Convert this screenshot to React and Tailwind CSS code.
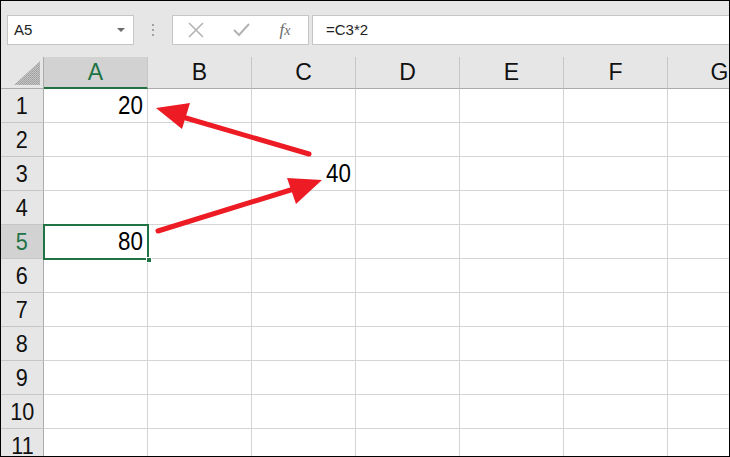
import React from 'react';

const columns = ['A', 'B', 'C', 'D', 'E', 'F', 'G'];
const rows = [1, 2, 3, 4, 5, 6, 7, 8, 9, 10, 11];

const values = {
  A1: '20',
  C3: '40',
  A5: '80',
};

const Toolbar = () => {
  return (
    <div className="h-[56px] flex items-start pt-[14px] pl-[6px]">
      <div className="w-[127px] h-[30px] bg-white border border-[#c6c6c6] flex items-center justify-between pl-[6px] pr-[8px]">
        <span className="text-[15px] text-[#222]">A5</span>
        <svg width="8" height="4" viewBox="0 0 8 4">
          <polygon points="0,0 8,0 4,4" fill="#6b6b6b" />
        </svg>
      </div>

      <div className="w-[38px] h-[30px] flex flex-col items-center justify-center gap-[3px]">
        <span className="w-[2px] h-[2px] bg-[#a0a0a0]" />
        <span className="w-[2px] h-[2px] bg-[#a0a0a0]" />
        <span className="w-[2px] h-[2px] bg-[#a0a0a0]" />
      </div>

      <div className="w-[137px] h-[30px] bg-white border border-[#c6c6c6] flex items-center">
        <div className="w-[46px] flex justify-center">
          <svg width="16" height="16" viewBox="0 0 16 16">
            <path d="M1 1 L15 15 M15 1 L1 15" stroke="#b3b3b3" strokeWidth="1.6" />
          </svg>
        </div>
        <div className="w-[44px] flex justify-center">
          <svg width="17" height="14" viewBox="0 0 17 14">
            <path d="M1 7 L6 12 L16 1" stroke="#b3b3b3" strokeWidth="2" fill="none" />
          </svg>
        </div>
        <div className="w-[44px] flex justify-center">
          <span className="text-[17px] italic text-[#6b6b6b] font-['Liberation_Serif',serif]">
            f<span className="text-[14px]">x</span>
          </span>
        </div>
      </div>

      <div className="ml-[3px] flex-1 h-[30px] bg-white border border-[#c6c6c6] border-r-0 flex items-center pl-[13px]">
        <span className="text-[15px] text-[#222]">=C3*2</span>
      </div>
    </div>
  );
};

const HeaderRow = () => {
  return (
    <div className="flex h-[32px]">
      <div className="w-[43px] shrink-0 border-r border-b border-[#ababab] flex items-end justify-end pr-[3px] pb-[3px]">
        <svg width="26" height="24" viewBox="0 0 26 24">
          <defs>
            <pattern id="dots" width="2" height="2" patternUnits="userSpaceOnUse">
              <rect width="2" height="2" fill="#c4c4c4" />
              <rect width="1" height="1" fill="#9e9e9e" />
              <rect x="1" y="1" width="1" height="1" fill="#a8a8a8" />
            </pattern>
          </defs>
          <polygon points="0,24 26,24 26,0" fill="url(#dots)" />
        </svg>
      </div>
      {columns.map((c) => (
        <div
          key={c}
          className={
            c === 'A'
              ? 'w-[104px] shrink-0 bg-[#d2d2d2] border-r border-[#c6c6c6] border-b-2 border-b-[#217346] flex items-center justify-center text-[23px] text-[#217346]'
              : 'w-[104px] shrink-0 border-r border-[#c6c6c6] border-b border-b-[#ababab] flex items-center justify-center text-[23px] text-[#111]'
          }
        >
          {c}
        </div>
      ))}
    </div>
  );
};

const GridRow = ({ n }) => {
  const selected = n === 5;
  return (
    <div className="flex h-[34px]">
      <div
        className={
          selected
            ? 'w-[43px] shrink-0 bg-[#d2d2d2] border-r border-b border-r-[#ababab] border-b-[#c6c6c6] flex items-center justify-center text-[24px] text-[#217346]'
            : 'w-[43px] shrink-0 border-r border-b border-r-[#ababab] border-b-[#c6c6c6] flex items-center justify-center text-[24px] text-[#111]'
        }
      >
        <span className="inline-block scale-x-[0.9]">{n}</span>
      </div>
      {columns.map((c) => (
        <div
          key={c}
          className="w-[104px] shrink-0 bg-white border-r border-b border-[#d4d4d4] flex items-center justify-end pr-[4px] text-[26px] text-black"
        >
          {values[c + n] && (
            <span className="inline-block origin-right scale-x-[0.86]">{values[c + n]}</span>
          )}
        </div>
      ))}
    </div>
  );
};

const Arrows = () => {
  return (
    <svg className="absolute left-0 top-0 pointer-events-none" width="730" height="457" viewBox="0 0 730 457">
      <line x1="308" y1="153" x2="178" y2="115" stroke="#ed1c24" strokeWidth="5" strokeLinecap="round" />
      <polygon points="155,107 189,102 181,128" fill="#ed1c24" />
      <line x1="157" y1="230" x2="296" y2="187" stroke="#ed1c24" strokeWidth="5" strokeLinecap="round" />
      <polygon points="321,179 286,177 295,203" fill="#ed1c24" />
    </svg>
  );
};

const App = () => {
  return (
    <div className="w-[730px] h-[457px] overflow-hidden">
      <div className="relative w-[730px] h-[457px] border border-black bg-[#e6e6e6] overflow-hidden font-['Liberation_Sans',Arial,sans-serif]">
        <Toolbar />
        <HeaderRow />
        {rows.map((n) => (
          <GridRow key={n} n={n} />
        ))}

        {/* selected cell A5 */}
        <div className="absolute left-[42px] top-[223px] w-[106px] h-[36px] border-2 border-[#217346]" />
        <div className="absolute left-[145px] top-[256px] w-[6px] h-[6px] bg-[#217346] border border-white" />

        <Arrows />
      </div>
    </div>
  );
};

export default App;
